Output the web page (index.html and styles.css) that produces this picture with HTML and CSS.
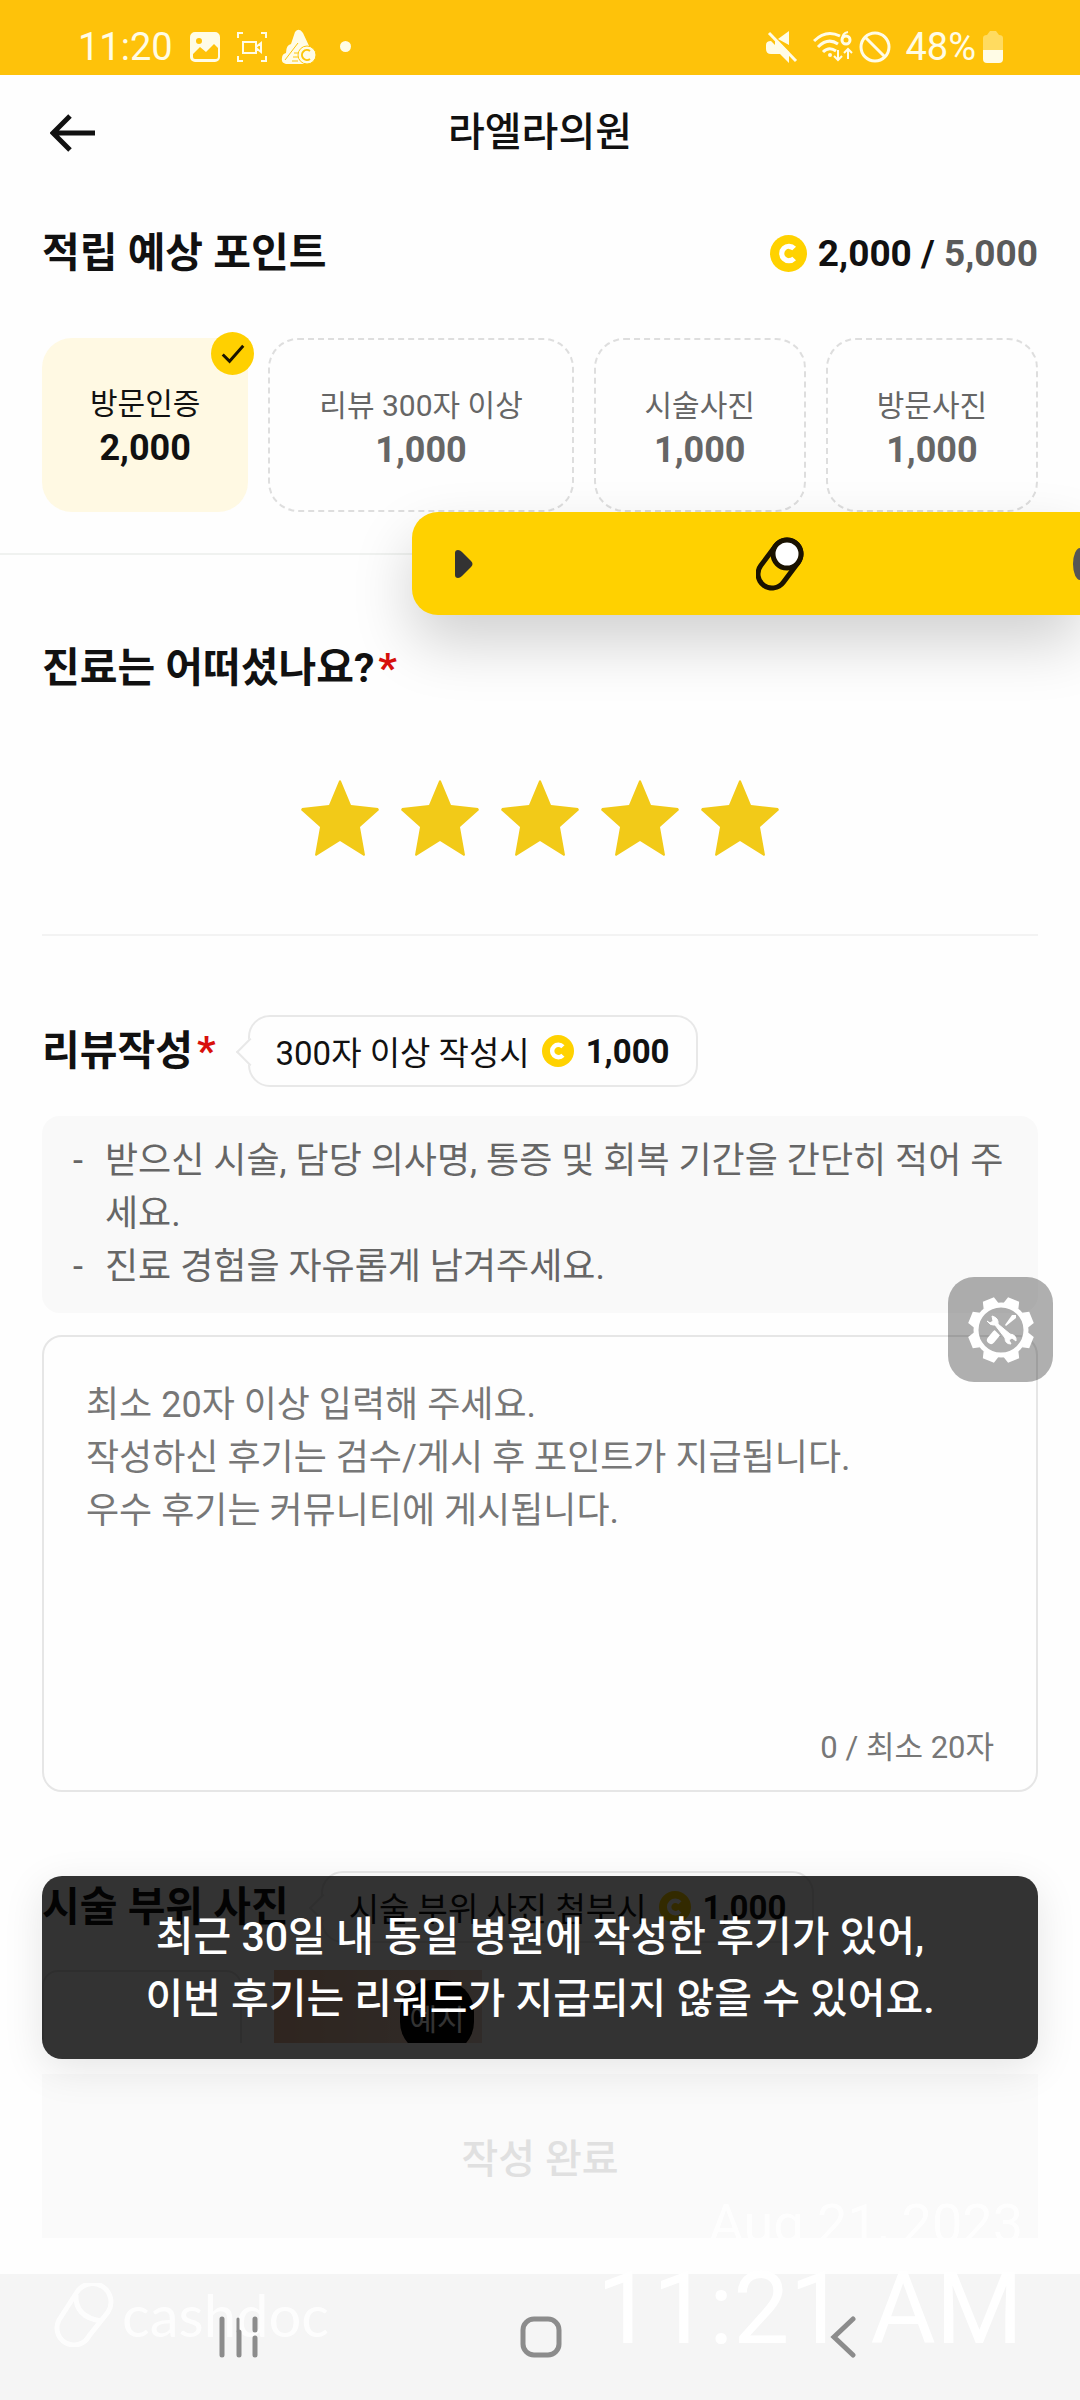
FILE: index.html
```html
<!DOCTYPE html>
<html lang="ko">
<head>
<meta charset="utf-8">
<meta name="viewport" content="width=device-width, initial-scale=1">
<title>라엘라의원</title>
<link rel="stylesheet" href="styles.css">
</head>
<body>
<svg class="defs" aria-hidden="true">
  <symbol id="coin" viewBox="0 0 36 36">
    <circle cx="18" cy="18" r="18" fill="#ffd200"/>
    <path d="M23.5 13.2A7 7 0 1 0 23.5 22.8" fill="none" stroke="#fff" stroke-width="5"/>
  </symbol>
  <symbol id="tooth" viewBox="-34 -34 68 68">
    <path d="M-8-26-6-33H6L8-26Z" fill="#fff"/>
  </symbol>
</svg>

<div class="status">
  <span class="status-text">11:20</span>
  <svg class="st-image" width="30" height="30" viewBox="0 0 30 30"><path fill-rule="evenodd" fill="#fffce6" d="M5 0h20a5 5 0 0 1 5 5v20a5 5 0 0 1-5 5H5a5 5 0 0 1-5-5V5a5 5 0 0 1 5-5ZM9 6a3 3 0 1 0 0 6 3 3 0 0 0 0-6ZM3 22l7-7 6 5 8-8 4 4v9q0 2-2 2H5q-2 0-2-2Z"/></svg>
  <svg class="st-video" width="30" height="30" viewBox="0 0 30 30" fill="none" stroke="#fffce6" stroke-width="2"><path d="M1 6V1h5M24 1h5v5M29 24v5h-5M6 29H1v-5M6 10h13v11H6ZM19 15l5-4v9l-5-4"/></svg>
  <svg class="st-app" width="36" height="36" viewBox="0 0 36 36"><path fill="#fffce6" d="M14 3q4-5 8 1l7 15-6 16H5q-5-1-4-6 0-4 4-5 0-8 5-9Z"/><path d="M4 31 17 14M11 32h6M12 28h5M13 24h4" fill="none" stroke="#fdc60b" stroke-width="1"/><circle cx="26" cy="26" r="9" fill="#fffce6" stroke="#fdc60b"/><path d="M29 22a5 5 0 1 0 0 8" fill="none" stroke="#fdc60b" stroke-width="2"/></svg>
  <span class="st-dot"></span>
  <svg class="st-mute" width="32" height="32" viewBox="0 0 32 32"><path d="M23 0v14L12 8ZM5 10l18 18v4l-9-9H5q-5 0-5-5v-4q0-4 5-4ZM9 10h3l11 11v9l-9-8H9Z" fill="#fffce6"/><path d="M3 2l27 28" stroke="#fffce6" stroke-width="3"/></svg>
  <svg class="st-wifi" width="40" height="32" viewBox="0 0 40 32" fill="none" stroke="#fffce6" stroke-width="3"><path d="M1 10Q13-2 27 5M5 16q10-10 20-3M10 21q6-6 13-1"/><circle cx="17" cy="24" r="2" fill="#fffce6" stroke="none"/><circle cx="33" cy="9" r="4"/><path d="M29 9q0-7 6-8M25 19v10M21 25l4 4 4-4M35 28V18M31 22l4-4 4 4" stroke-width="2"/></svg>
  <svg class="st-ban" width="32" height="32" viewBox="0 0 32 32" fill="none" stroke="#fffce6" stroke-width="3"><circle cx="16" cy="16" r="14"/><path d="M6 6l20 20"/></svg>
  <span class="status-text">48%</span>
  <svg class="st-battery" width="22" height="32" viewBox="0 0 22 32"><path d="M1 7q0-3 4-3l3-4h6l3 4q4 0 4 3v13H1Z" fill="#ffdb60"/><path d="M1 19h20v9q0 4-4 4H5q-4 0-4-4Z" fill="#fffce6"/></svg>
</div>

<main class="page">
  <header class="topbar">
    <button class="back" type="button" aria-label="뒤로"><svg width="46" height="38" viewBox="0 0 46 38" fill="none" stroke="#111" stroke-width="5"><path d="M45 19H4M20 2 3 19l17 17"/></svg></button>
    <h1 class="topbar-title">라엘라의원</h1>
  </header>

  <section class="points">
    <div class="points-head">
      <h2 class="heading">적립 예상 포인트</h2>
      <p class="total"><svg class="coin-lg"><use href="#coin"/></svg><span>2,000 / <span class="total-max">5,000</span></span></p>
    </div>
    <ul class="cards">
      <li class="card card-on"><span>방문인증</span><b>2,000</b>
        <svg class="check" viewBox="0 0 44 44"><circle cx="22" cy="22" r="22" fill="#ffd000"/><path d="M12 23l7 7 14-16" fill="none" stroke="#1a1400" stroke-width="3"/></svg></li>
      <li class="card"><span>리뷰 300자 이상</span><b>1,000</b></li>
      <li class="card"><span>시술사진</span><b>1,000</b></li>
      <li class="card"><span>방문사진</span><b>1,000</b></li>
    </ul>
    <aside class="banner">
      <svg class="banner-play" width="18" height="28" viewBox="0 0 18 28"><path d="M0 3q0-3 3-3 2 0 4 2l9 9q3 3 0 6l-9 9q-2 2-4 2-3 0-3-3Z" fill="#333"/></svg>
      <svg class="banner-pill" width="48" height="54" viewBox="0 0 48 54" stroke-linecap="round"><path d="M31 17 16 37" stroke="#1a1200" stroke-width="33"/><path d="M31 17 16 37" stroke="#ffd100" stroke-width="23"/><circle cx="31" cy="17" r="14" fill="#fff" stroke="#1a1200" stroke-width="5"/></svg>
      <span class="banner-dot"></span>
    </aside>
  </section>

  <section class="rating">
    <h2 class="heading">진료는 어떠셨나요?<span class="req">*</span></h2>
    <div class="stars" role="radiogroup" aria-label="별점">
      <input class="star" type="radio" name="score" value="1" aria-label="1점">
      <input class="star" type="radio" name="score" value="2" aria-label="2점">
      <input class="star" type="radio" name="score" value="3" aria-label="3점">
      <input class="star" type="radio" name="score" value="4" aria-label="4점">
      <input class="star" type="radio" name="score" value="5" aria-label="5점" checked>
    </div>
  </section>

  <section class="review">
    <div class="row">
      <h2 class="heading"><label for="review">리뷰작성</label><span class="req">*</span></h2>
      <p class="bubble">300자 이상 작성시<svg class="coin-sm"><use href="#coin"/></svg><b>1,000</b></p>
    </div>
    <ul class="tips">
      <li>받으신 시술, 담당 의사명, 통증 및 회복 기간을 간단히 적어 주세요.</li>
      <li>진료 경험을 자유롭게 남겨주세요.</li>
    </ul>
    <div class="field">
      <textarea id="review" class="field-input" placeholder="최소 20자 이상 입력해 주세요.&#10;작성하신 후기는 검수/게시 후 포인트가 지급됩니다.&#10;우수 후기는 커뮤니티에 게시됩니다."></textarea>
      <p class="field-count">0 / 최소 20자</p>
    </div>
  </section>

  <section class="photos">
    <div class="row">
      <h2 class="heading">시술 부위 사진</h2>
      <p class="bubble">시술 부위 사진 첨부시<svg class="coin-sm"><use href="#coin"/></svg><b>1,000</b></p>
    </div>
    <div class="thumbs">
      <div class="thumb-add"></div>
      <div class="thumb"><span class="thumb-tag">예시</span></div>
    </div>
  </section>
</main>

<button class="tools" type="button" aria-label="도구">
  <svg width="68" height="68" viewBox="-34 -34 68 68">
    <g fill="#fff">
      <path d="M-8-26-6-33H6L8-26Z" transform="rotate(22.5)"/>
      <path d="M-8-26-6-33H6L8-26Z" transform="rotate(67.5)"/>
      <path d="M-8-26-6-33H6L8-26Z" transform="rotate(112.5)"/>
      <path d="M-8-26-6-33H6L8-26Z" transform="rotate(157.5)"/>
      <path d="M-8-26-6-33H6L8-26Z" transform="rotate(202.5)"/>
      <path d="M-8-26-6-33H6L8-26Z" transform="rotate(247.5)"/>
      <path d="M-8-26-6-33H6L8-26Z" transform="rotate(292.5)"/>
      <path d="M-8-26-6-33H6L8-26Z" transform="rotate(337.5)"/>
    </g>
    <circle r="25" fill="none" stroke="#fff" stroke-width="5"/>
    <path d="M15-15 11-15 4-5 5-4 15-12Z" fill="#fff"/>
    <path d="M-5 4-10 10" stroke="#fff" stroke-width="8" stroke-linecap="round"/>
    <path d="M-7-7 10 10" stroke="#aeaeae" stroke-width="9"/>
    <path d="M-14-9q3 5 8 4L4 8q0 6 6 6l-2-4 3-2 4 3q1-6-6-7L-3-6q1-6-6-8l1 5-3 2Z" fill="#fff" stroke="#fff"/>
  </svg>
</button>

<footer class="bottom">
  <div class="toast" role="status">최근 30일 내 동일 병원에 작성한 후기가 있어,<br>이번 후기는 리워드가 지급되지 않을 수 있어요.</div>
  <div class="submit-bar"><button class="submit" type="button" disabled>작성 완료</button></div>
  <nav class="nav">
    <button type="button" aria-label="최근 앱"><svg width="40" height="42" viewBox="0 0 40 42" stroke="#8c8c8c" stroke-width="5" stroke-linecap="round"><path d="M3 3v36M20 16v23M36 3v11M36 22v17"/><path d="M19 3v12" stroke-width="3"/></svg></button>
    <button type="button" aria-label="홈"><svg width="42" height="42" viewBox="0 0 42 42"><rect x="3" y="3" width="36" height="36" rx="11" fill="none" stroke="#8c8c8c" stroke-width="5"/></svg></button>
    <button type="button" aria-label="뒤로 가기"><svg width="26" height="42" viewBox="0 0 26 42" fill="none" stroke="#8c8c8c" stroke-width="5" stroke-linecap="round"><path d="M23 3 4 21l19 18"/></svg></button>
  </nav>
  <div class="mark">
    <svg width="60" height="64" viewBox="0 0 60 64" fill="none" stroke="#fff" stroke-width="5"><path d="M23 9a17 17 0 0 1 31 20L35 53A17 17 0 0 1 5 37Z"/><path d="M22 12q-1 22 25 26"/></svg>
    <span>cashdoc</span>
  </div>
  <div class="stamp"><span class="stamp-date">Aug 21, 2023</span><span class="stamp-time">11:21 AM</span></div>
</footer>
</body>
</html>
```
FILE: styles.css
```css
* {
  box-sizing: border-box;
}

body {
  display: flex;
  flex-direction: column;
  height: 100vh;
  margin: 0;
  background: #fefefe;
  color: #111;
  font-family: Roboto, "Noto Sans CJK KR", sans-serif;
  font-size: 36px;
  overflow: hidden;
}

h1,
h2,
p,
ul {
  margin: 0;
  padding: 0;
}

ul {
  list-style: none;
}

button {
  padding: 0;
  border: 0;
  background: none;
  font: inherit;
}

svg {
  display: block;
  flex: none;
}

.defs {
  position: absolute;
  width: 0;
  height: 0;
}

/* Status bar */
.status {
  display: flex;
  flex: none;
  align-items: center;
  height: 75px;
  padding: 18px 76px 0 78px;
  background: #fec20a;
  color: #fffce6;
}

.status-text {
  font-size: 38px;
  line-height: 56px;
}

.st-image {
  margin-left: 17px;
}

.st-video {
  margin-left: 17px;
}

.st-app {
  margin-left: 14px;
}

.st-dot {
  width: 11px;
  height: 11px;
  margin-left: 23px;
  border-radius: 50%;
  background: #fffce6;
}

.st-mute {
  margin-left: auto;
}

.st-wifi {
  margin-left: 15px;
}

.st-ban {
  margin: 0 14px 0 6px;
}

.st-battery {
  margin-left: 6px;
}

/* Scrolling content */
.page {
  flex: 1;
  min-height: 0;
  overflow: hidden auto;
  scrollbar-width: none;
}

.topbar {
  display: grid;
  grid-template-columns: 46px 1fr 46px;
  align-items: center;
  height: 114px;
  padding: 2px 50px 0;
}

.topbar-title {
  font-size: 40px;
  font-weight: 500;
  line-height: 60px;
  text-align: center;
}

.heading {
  font-size: 41px;
  font-weight: 700;
  line-height: 60px;
  white-space: nowrap;
}

.req {
  margin-left: 4px;
  color: #d8100c;
}

.points {
  position: relative;
  padding: 34px 42px 41px;
  border-bottom: 2px solid #f0f2f0;
}

.points-head {
  display: flex;
  justify-content: space-between;
}

.total {
  display: flex;
  align-items: center;
  gap: 11px;
  font-size: 37px;
  font-weight: 700;
}

.total-max {
  color: #5a5a5a;
}

.coin-lg {
  width: 37px;
  height: 37px;
}

.cards {
  display: flex;
  gap: 20px;
  margin-top: 55px;
}

.card {
  position: relative;
  display: flex;
  flex: 1 0 auto;
  flex-direction: column;
  align-items: center;
  justify-content: center;
  height: 174px;
  padding: 5px 46px 0;
  border: 2px dashed #dedede;
  border-radius: 30px;
  color: #666;
  font-size: 30px;
  line-height: 44px;
}

.card b {
  font-size: 36px;
}

.card-on {
  flex-grow: 0;
  padding: 2px 48px 0;
  border: 0;
  background: #fff9e3;
  color: #111;
}

.check {
  position: absolute;
  top: -6px;
  right: -6px;
  width: 43px;
  height: 43px;
}

.banner {
  position: absolute;
  top: 323px;
  right: 0;
  left: 412px;
  display: flex;
  align-items: center;
  justify-content: space-between;
  height: 103px;
  padding-left: 43px;
  border-radius: 26px 0 0 26px;
  background: #ffd100;
  box-shadow: 0 28px 60px rgba(0, 0, 0, 0.18);
}

.banner-pill {
  margin-left: 14px;
}

.banner-dot {
  width: 7px;
  height: 32px;
  border-radius: 7px 0 0 7px / 16px 0 0 16px;
  background: #555;
}

.rating {
  margin: 0 42px;
  padding: 83px 0 78px;
  border-bottom: 2px solid #f3f3f3;
}

.stars {
  display: flex;
  justify-content: center;
  gap: 20px;
  margin-top: 82px;
}

.star {
  width: 80px;
  height: 76px;
  margin: 0;
  appearance: none;
  background: #f2ca18;
  clip-path: polygon(39px 1px, 40px 0, 41px 1px, 51px 25px, 78px 28px, 79px 30px, 60px 47px, 65px 75px, 64px 76px, 40px 61px, 16px 76px, 15px 75px, 20px 47px, 1px 30px, 2px 28px, 29px 25px);
}

/* Review text */
.review,
.photos {
  padding: 79px 42px 0;
}

.row {
  display: flex;
  align-items: center;
  gap: 32px;
}

.bubble {
  position: relative;
  display: flex;
  align-items: center;
  height: 72px;
  padding: 0 26px;
  border: 2px solid #e8e8e8;
  border-radius: 22px;
  background: #fefefe;
  font-size: 33px;
  white-space: nowrap;
}

.bubble::before {
  position: absolute;
  top: 25px;
  left: -10px;
  width: 18px;
  height: 18px;
  border: solid #e8e8e8;
  border-width: 0 0 2px 2px;
  background: #fefefe;
  content: "";
  transform: rotate(45deg);
}

.coin-sm {
  width: 32px;
  height: 32px;
  margin: 0 12px;
}

.tips {
  margin-top: 29px;
  padding: 19px 28px 19px 31px;
  border-radius: 18px;
  background: #f9f9f9;
  color: #666;
  line-height: 53px;
  word-break: break-all;
}

.tips li {
  display: flex;
}

.tips li::before {
  flex: none;
  width: 32px;
  content: "-";
}

.field {
  margin-top: 22px;
  padding: 42px 42px 20px;
  border: 2px solid #e6e6e6;
  border-radius: 20px;
}

.field-input {
  display: block;
  width: 100%;
  height: 347px;
  padding: 0;
  border: 0;
  outline: 0;
  background: none;
  color: #111;
  font: inherit;
  line-height: 53px;
  resize: none;
}

.field-input::placeholder {
  color: #777;
}

.field-count {
  color: #777;
  font-size: 31px;
  line-height: 44px;
  text-align: right;
}

/* Photos */
.thumbs {
  display: flex;
  gap: 32px;
  margin-top: 27px;
}

.thumb-add {
  width: 200px;
  height: 200px;
  border: 2px solid #e6e6e6;
  border-radius: 16px;
}

.thumb {
  width: 208px;
  height: 200px;
  background: linear-gradient(90deg, #e8b89c, #f0d8cc);
}

.thumb-tag {
  display: block;
  width: 74px;
  height: 74px;
  margin: 10px 0 0 126px;
  border-radius: 32px;
  background: #000;
  color: #fff;
  font-size: 30px;
  line-height: 80px;
  text-align: center;
}

.tools {
  position: absolute;
  top: 1277px;
  right: 27px;
  display: grid;
  place-items: center;
  width: 105px;
  height: 105px;
  border-radius: 26px;
  background: rgba(0, 0, 0, 0.31);
}

/* Bottom area */
.bottom {
  position: relative;
  flex: none;
  background: #fefefe;
}

.toast {
  position: absolute;
  right: 42px;
  bottom: calc(100% - 16px);
  left: 42px;
  padding: 30px 20px 29px;
  border-radius: 20px;
  background: rgba(0, 0, 0, 0.8);
  box-shadow: 0 10px 40px rgba(0, 0, 0, 0.1);
  color: #fff;
  font-size: 41px;
  font-weight: 500;
  line-height: 62px;
  text-align: center;
}

.submit-bar {
  padding: 31px 42px 36px;
}

.submit {
  width: 100%;
  height: 164px;
  background: #fafafa;
  color: #e0e0e0;
  font-size: 40px;
  font-weight: 500;
}

.nav {
  display: grid;
  grid-template-columns: repeat(3, 1fr);
  align-items: center;
  height: 126px;
  padding: 0 86px 0 88px;
  background: #f5f5f5;
}

.nav button {
  position: relative;
  z-index: 2;
  justify-self: center;
}

.mark {
  position: absolute;
  bottom: 50px;
  left: 54px;
  display: flex;
  align-items: center;
  gap: 8px;
  color: #fff;
  font-family: Lato, sans-serif;
  font-size: 58px;
  line-height: 70px;
  opacity: 0.8;
}

.stamp {
  position: absolute;
  right: 57px;
  bottom: 36px;
  display: flex;
  flex-direction: column;
  align-items: flex-end;
  color: #fff;
}

.stamp-date {
  font-size: 54px;
  line-height: 60px;
  opacity: 0.8;
}

.stamp-time {
  font-size: 100px;
  line-height: 110px;
}
```
